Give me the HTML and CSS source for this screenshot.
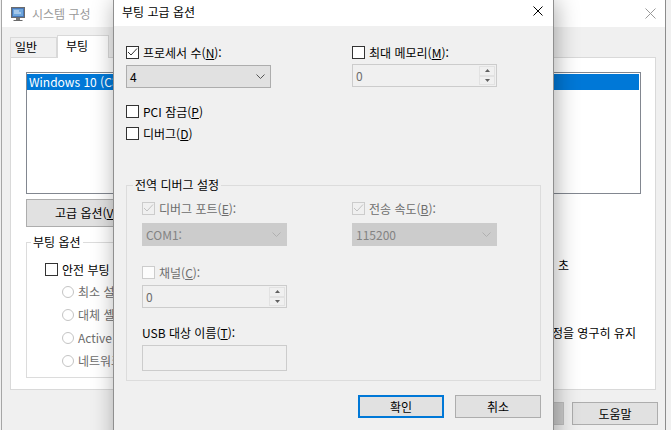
FILE: index.html
```html
<!DOCTYPE html>
<html lang="ko">
<head>
<meta charset="utf-8">
<title>부팅 고급 옵션</title>
<link rel="stylesheet" href="styles.css">
</head>
<body>
<div class="desktop">
  <section class="win-bg">
    <header class="bg-titlebar">
      <svg class="app-icon" width="16" height="16" viewBox="0 0 16 16">
        <rect x="1.5" y="1.5" width="13" height="10" fill="#4a78b8" stroke="#6b6b6b"/>
        <rect x="3" y="3" width="10" height="7" fill="#6ea6dc"/>
        <path d="M4 5h5M4 7h7" stroke="#dfeaf6" stroke-width="1"/>
        <rect x="6" y="12" width="4" height="2" fill="#7a7a7a"/>
        <path d="M3.5 14.5h9" stroke="#6b6b6b"/>
      </svg>
      <span class="bg-title">시스템 구성</span>
      <svg class="close-x bg-close" width="11" height="11" viewBox="0 0 11 11">
        <path d="M0.5 0.5l10 10M10.5 0.5l-10 10" stroke="#999" stroke-width="1"/>
      </svg>
    </header>
    <div class="bg-client">
      <nav class="tabs">
        <span class="tab first">일반</span>
        <span class="tab active">부팅</span>
      </nav>
      <div class="tab-panel">
        <div class="listbox">
          <div class="list-item sel">Windows 10 (C:)</div>
        </div>
        <div class="list-btns">
          <button class="btn adv">고급 옵션(<u>V</u>)...</button>
        </div>
        <div class="boot-row">
          <fieldset class="group boot-group">
            <legend>부팅 옵션</legend>
            <div class="boot-inner">
              <label class="chk"><span class="box"></span><span>안전 부팅</span></label>
              <div class="radios">
                <label class="radio"><span class="circle"></span><span>최소 설치</span></label>
                <label class="radio"><span class="circle"></span><span>대체 셸</span></label>
                <label class="radio"><span class="circle"></span><span>Active</span></label>
                <label class="radio"><span class="circle"></span><span>네트워크</span></label>
              </div>
            </div>
          </fieldset>
          <div class="right-col">
            <div class="timeout-row">
              <span class="timeout-edit"></span>
              <span class="unit">초</span>
            </div>
            <label class="chk perm"><span class="box"></span><span>모든 부팅 설정을 영구히 유지</span></label>
          </div>
        </div>
      </div>
      <div class="bg-footer">
        <button class="btn" disabled></button>
        <button class="btn">도움말</button>
      </div>
    </div>
  </section>

  <section class="dialog">
    <header class="dlg-titlebar">
      <span class="dlg-title">부팅 고급 옵션</span>
      <svg class="close-x dlg-close" width="10" height="10" viewBox="0 0 10 10">
        <path d="M0.5 0.5l9 9M9.5 0.5l-9 9" stroke="#000" stroke-width="1"/>
      </svg>
    </header>
    <div class="dlg-body">
      <div class="top-grid">
        <label class="chk"><span class="box"><svg width="11" height="11" viewBox="0 0 11 11"><polyline points="1,5 4,8 10,1.5" fill="none" stroke="#333" stroke-width="1"/></svg></span><span>프로세서 수(<u>N</u>):</span></label>
        <label class="chk"><span class="box"></span><span>최대 메모리(<u>M</u>):</span></label>
        <div class="combo"><span>4</span><svg class="chev" width="9" height="5" viewBox="0 0 9 5"><polyline points="0.5,0.5 4.5,4.5 8.5,0.5" fill="none" stroke="#555" stroke-width="1"/></svg></div>
        <div class="spin up1"><span class="val">0</span><span class="spin-btns"><span class="sb"><svg width="5" height="3" viewBox="0 0 5 3"><polygon points="0,3 2.5,0 5,3" fill="#606060"/></svg></span><span class="sb"><svg width="5" height="3" viewBox="0 0 5 3"><polygon points="0,0 2.5,3 5,0" fill="#606060"/></svg></span></span></div>
      </div>
      <label class="chk pci"><span class="box"></span><span>PCI 잠금(<u>P</u>)</span></label>
      <label class="chk dbg"><span class="box"></span><span>디버그(<u>D</u>)</span></label>

      <fieldset class="group dbg-group">
        <legend>전역 디버그 설정</legend>
        <div class="dbg-grid">
          <label class="chk dis"><span class="box grey"><svg width="11" height="11" viewBox="0 0 11 11"><polyline points="1,5 4,8 10,1.5" fill="none" stroke="#c2c2c2" stroke-width="1"/></svg></span><span>디버그 포트(<u>E</u>):</span></label>
          <label class="chk dis"><span class="box grey"><svg width="11" height="11" viewBox="0 0 11 11"><polyline points="1,5 4,8 10,1.5" fill="none" stroke="#c2c2c2" stroke-width="1"/></svg></span><span>전송 속도(<u>B</u>):</span></label>
          <div class="combo dis r2"><span>COM1:</span><svg class="chev" width="9" height="5" viewBox="0 0 9 5"><polyline points="0.5,0.5 4.5,4.5 8.5,0.5" fill="none" stroke="#b0b0b0" stroke-width="1"/></svg></div>
          <div class="combo dis r2"><span>115200</span><svg class="chev" width="9" height="5" viewBox="0 0 9 5"><polyline points="0.5,0.5 4.5,4.5 8.5,0.5" fill="none" stroke="#b0b0b0" stroke-width="1"/></svg></div>
          <label class="chk dis c1 r3"><span class="box white"></span><span>채널(<u>C</u>):</span></label>
          <div class="spin c1 r4"><span class="val">0</span><span class="spin-btns"><span class="sb"><svg width="5" height="3" viewBox="0 0 5 3"><polygon points="0,3 2.5,0 5,3" fill="#606060"/></svg></span><span class="sb"><svg width="5" height="3" viewBox="0 0 5 3"><polygon points="0,0 2.5,3 5,0" fill="#606060"/></svg></span></span></div>
          <div class="field-label c1 r5">USB 대상 이름(<u>T</u>):</div>
          <div class="edit-box c1 r6"></div>
        </div>
      </fieldset>

      <div class="dlg-footer">
        <button class="btn default">확인</button>
        <button class="btn">취소</button>
      </div>
    </div>
  </section>
</div>
</body>
</html>
```

FILE: styles.css
```css
* { box-sizing: border-box; margin: 0; padding: 0; }
html, body { width: 671px; height: 430px; overflow: hidden; }
body {
  background: #f0f0f0;
  font-family: "Noto Sans CJK KR", "Noto Sans", sans-serif;
  font-size: 12px;
  line-height: 16px;
  color: #000;
}
u { text-decoration: underline; text-underline-offset: 1px; }
button { font: inherit; color: inherit; }

.desktop { position: relative; width: 671px; height: 430px; overflow: hidden; }

/* ---------- background window ---------- */
.win-bg {
  position: absolute; left: 1px; top: 0; z-index: 0;
  width: 665px; height: 446px;
  background: #f0f0f0;
  border-left: 1px solid #a6a6a6;
  border-right: 1px solid #8c8c8c;
  display: flex; flex-direction: column;
}
.bg-titlebar {
  height: 27px; flex: none; background: #fff;
  display: flex; align-items: center; padding-left: 8px;
}
.app-icon { flex: none; }
.bg-title { margin-left: 6px; color: #999; }
.close-x { margin-left: auto; flex: none; }
.bg-close { margin-right: 9px; }

.bg-client { padding: 8px 0 0 8px; display: flex; flex-direction: column; }
.tabs {
  display: flex; align-items: flex-end; height: 23px;
  margin-bottom: -1px; position: relative; z-index: 1;
}
.tab {
  height: 20px; margin-bottom: 1px; padding: 0 8px;
  border: 1px solid #d9d9d9; border-bottom: none;
  background: #f0f0f0; line-height: 18px; white-space: nowrap;
}
.tab.first { width: 47px; padding: 0 0 0 4px; }
.tab.active { height: 23px; margin-bottom: 0; width: 52px; background: #fff; padding: 0 0 0 8px; line-height: 19px; }

.tab-panel {
  width: 646px; height: 333px; background: #fff;
  border: 1px solid #d9d9d9; padding: 14px 0 0 15px;
}
.listbox { width: 615px; height: 122px; border: 1px solid #828790; padding: 1px 0 0 0; }
.list-item { height: 16px; line-height: 16px; padding-left: 2px; white-space: nowrap; }
.list-item.sel { background: #0078d7; color: #fff; margin-right: 1px; }

.list-btns { display: flex; gap: 8px; margin-top: 5px; }
.btn {
  height: 23px; width: 86px; flex: none;
  background: #e1e1e1; border: 1px solid #adadad;
  display: flex; align-items: center; justify-content: center; white-space: nowrap;
}
.btn:disabled { background: #cccccc; border-color: #bfbfbf; color: #838383; }
.btn.adv { width: 133px; height: 28px; justify-content: flex-start; padding-left: 28px; }

.boot-row { display: flex; align-items: flex-start; margin-top: 7px; }
.group { border: 1px solid #dcdcdc; min-width: 0; }
.group legend { line-height: 16px; padding: 0 2px; }
.boot-group { width: 370px; height: 144px; }
.boot-group legend { margin-left: 4px; }
.boot-inner { padding: 13px 0 0 18px; }
.radios { margin-top: 4px; padding-left: 17px; }
.radio { display: flex; align-items: center; height: 23px; color: #6d6d6d; white-space: nowrap; line-height: 13px; }
.circle {
  width: 12px; height: 12px; border-radius: 50%;
  border: 1px solid #c4c4c4; background: #fff; margin-right: 4px; flex: none;
}

.right-col { margin-left: 14px; padding-top: 19px; display: flex; flex-direction: column; }
.timeout-row { display: flex; align-items: center; height: 23px; white-space: nowrap; padding-left: 83px; }
.timeout-edit { width: 59px; height: 23px; border: 1px solid #7a7a7a; flex: none; }
.unit { margin-left: 6px; }
.perm { margin-top: 50px; padding-left: 63px; }

.bg-footer { display: flex; justify-content: flex-end; gap: 8px; margin-top: 12px; padding-right: 7px; }

/* ---------- checkboxes ---------- */
.chk { display: flex; align-items: center; height: 13px; line-height: 13px; white-space: nowrap; }
.box {
  width: 13px; height: 13px; flex: none; margin-right: 4px;
  border: 1px solid #333; background: #fff;
  display: flex; align-items: center; justify-content: center;
}
.chk.dis { color: #6d6d6d; }
.box.grey { border-color: #cccccc; background: #f0f0f0; }
.box.white { border-color: #cccccc; background: #fcfcfc; }

/* ---------- dialog ---------- */
.dialog {
  position: absolute; left: 113px; top: -1px; z-index: 2;
  width: 441px; height: 460px;
  background: #f0f0f0; border: 1px solid #8f8f8f;
  box-shadow: 2px 2px 22px rgba(0, 0, 0, 0.33);
  display: flex; flex-direction: column;
}
.dlg-titlebar {
  height: 26px; flex: none; background: #fff;
  display: flex; align-items: center; padding: 0 0 2px 8px;
}
.dlg-close { align-self: flex-start; margin-top: 6px; margin-right: 10px; }
.dlg-body { padding: 20px 12px 0; }

.top-grid { display: grid; grid-template-columns: 226px 145px; row-gap: 6px; }

.combo {
  width: 145px; height: 23px; border: 1px solid #adadad; background: #e1e1e1;
  display: flex; align-items: center; padding: 0 5px 0 3px;
}
.chev { margin-left: auto; }
.combo.dis { background: #cccccc; border-color: #cccccc; color: #838383; }

.spin {
  width: 145px; height: 23px; border: 1px solid #cccccc; background: #f0f0f0;
  display: flex; color: #6d6d6d;
}
.spin.up1 { margin-top: -1px; }
.spin .val { flex: 1; padding-left: 3px; line-height: 21px; }
.spin-btns { width: 17px; display: flex; flex-direction: column; padding: 1px 1px 1px 0; }
.sb {
  flex: 1; display: flex; align-items: center; justify-content: center;
  border: 1px solid #e2e2e2; background: #f0f0f0;
}

.pci { margin-top: 17px; }
.dbg { margin-top: 9px; }

.dbg-group { margin-top: 37px; width: 415px; }
.dbg-group legend { margin-left: 6px; }
.dbg-grid {
  display: grid; grid-template-columns: 145px 145px; column-gap: 65px;
  padding: 9px 15px 9px;
}
.c1 { grid-column: 1; }
.r2 { margin-top: 8px; }
.r3 { margin-top: 20px; }
.r4 { margin-top: 6px; }
.r5 { margin-top: 18px; height: 13px; line-height: 13px; white-space: nowrap; }
.r6 { margin-top: 6px; }
.edit-box { width: 145px; height: 26px; border: 1px solid #cccccc; background: #f0f0f0; }

.dlg-footer { display: flex; justify-content: flex-end; gap: 11px; margin-top: 14px; }
.btn.default { border: 2px solid #0078d7; }
```
